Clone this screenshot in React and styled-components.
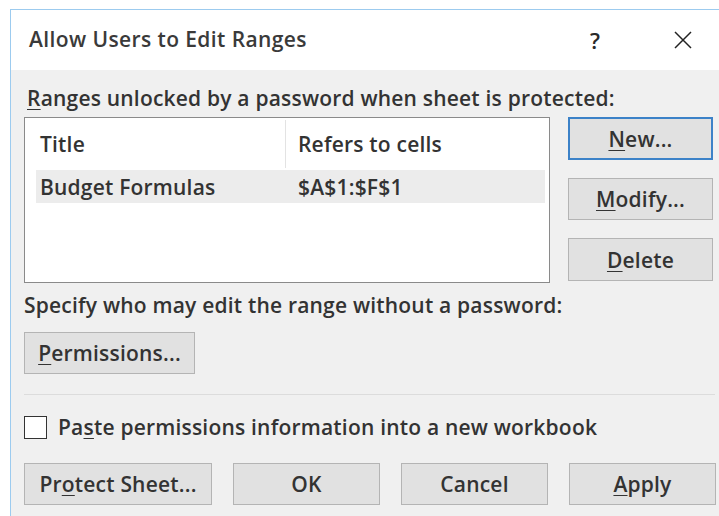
import React from 'react'
import styled, { createGlobalStyle } from 'styled-components';

const GlobalStyle = createGlobalStyle`
  html, body {
    margin: 0;
    background: #ffffff;
  }
  body {
    font-family: "Open Sans", "Noto Sans", sans-serif;
    color: #1e1e1e;
  }
`;

const Page = styled.div`
  height: 516px;
  padding: 9px 0 0 10px;
  box-sizing: border-box;
  overflow: hidden;
`;

const Window = styled.div`
  width: 740px;
  height: 520px;
  border-top: 1px solid #9ccbef;
  border-left: 1px solid #9ccbef;
  background: #f0f0f0;
`;

const TitleBar = styled.div`
  height: 60px;
  background: #ffffff;
  display: flex;
  align-items: center;
  padding-left: 18px;
`;

const Title = styled.div`
  flex: 1;
  font-size: 21px;
  letter-spacing: 0.4px;
  font-weight: 600;
  color: #3a3a3a;
  margin-top: -2px;
`;

const TitleButton = styled.div`
  width: 44px;
  display: flex;
  justify-content: center;
  align-items: center;
  font-size: 22px;
  font-weight: 600;
  color: #2a2a2a;
  margin-right: ${p => p.$mr || 0}px;
`;

const Body = styled.div`
  padding: 16px 0 0 13px;
  width: 692px;
  font-size: 21px;
  letter-spacing: 0.2px;
  font-weight: 600;
  color: #333333;
`;

const Label = styled.div`
  line-height: 24px;
  white-space: nowrap;
  margin-left: ${p => p.$ml || 0}px;
`;

const U = styled.span`
  text-decoration: underline;
  text-decoration-thickness: 1px;
  text-underline-offset: 3px;
`;

const TopRow = styled.div`
  display: flex;
  gap: 18px;
  margin-top: 7px;
`;

const ListBox = styled.div`
  width: 526px;
  height: 166px;
  box-sizing: border-box;
  border: 1px solid #8a8a8a;
  background: #ffffff;
  padding: 2px 4px 0 11px;
`;

const ListRow = styled.div`
  display: flex;
  height: ${p => p.$h}px;
  align-items: center;
  background: ${p => p.$selected ? '#ececec' : 'transparent'};
  margin-top: ${p => p.$selected ? 2 : 0}px;
`;

const Cell = styled.div`
  box-sizing: border-box;
  width: ${p => p.$w ? p.$w + 'px' : 'auto'};
  flex: ${p => p.$w ? 'none' : 1};
  padding-left: ${p => p.$pl}px;
  height: 100%;
  display: flex;
  align-items: center;
  white-space: nowrap;
  border-right: ${p => p.$divider ? '1px solid #e3e3e3' : 'none'};
`;

const ButtonColumn = styled.div`
  display: flex;
  flex-direction: column;
  gap: 18px;
`;

const Button = styled.div`
  box-sizing: border-box;
  width: ${p => p.$w || 145}px;
  height: ${p => p.$h || 43}px;
  margin-top: ${p => p.$mt || 0}px;
  display: flex;
  align-items: center;
  justify-content: center;
  background: #e1e1e1;
  border: ${p => p.$default ? '2px solid #3c82c8' : '1px solid #b4b4b4'};
  white-space: nowrap;
`;

const Separator = styled.div`
  height: 1px;
  background: #dcdcdc;
  margin: 20px 0 20px 0;
  width: 691px;
`;

const CheckRow = styled.div`
  display: flex;
  align-items: center;
  gap: 11px;
`;

const CheckBox = styled.div`
  width: 23px;
  height: 23px;
  box-sizing: border-box;
  border: 1px solid #333333;
  background: #ffffff;
`;

const BottomRow = styled.div`
  display: flex;
  gap: 21px;
  margin-top: 24px;
`;

const CloseIcon = () => (
  <svg width="20" height="20" viewBox="0 0 20 20">
    <path d="M2 2 L18 18 M18 2 L2 18" stroke="#222" strokeWidth="1.5" fill="none" />
  </svg>
);

const App = () => {
  return (
    <Page>
      <GlobalStyle />
      <Window>
        <TitleBar>
          <Title>Allow Users to Edit Ranges</Title>
          <TitleButton $mr={44}>?</TitleButton>
          <TitleButton $mr={46}><CloseIcon /></TitleButton>
        </TitleBar>
        <Body>
          <Label $ml={3}><U>R</U>anges unlocked by a password when sheet is protected:</Label>
          <TopRow>
            <ListBox>
              <ListRow $h={48}>
                <Cell $w={250} $pl={4} $divider>Title</Cell>
                <Cell $pl={12}>Refers to cells</Cell>
              </ListRow>
              <ListRow $h={33} $selected>
                <Cell $w={250} $pl={4}>Budget Formulas</Cell>
                <Cell $pl={12}>$A$1:$F$1</Cell>
              </ListRow>
            </ListBox>
            <ButtonColumn>
              <Button $default><span><U>N</U>ew...</span></Button>
              <Button $h={42}><span><U>M</U>odify...</span></Button>
              <Button><span><U>D</U>elete</span></Button>
            </ButtonColumn>
          </TopRow>
          <Label style={{ marginTop: 10 }}>Specify who may edit the range without a password:</Label>
          <Button $w={171} $h={42} $mt={15}><span><U>P</U>ermissions...</span></Button>
          <Separator />
          <CheckRow>
            <CheckBox />
            <Label>Pa<U>s</U>te permissions information into a new workbook</Label>
          </CheckRow>
          <BottomRow>
            <Button $w={188} $h={42}><span>Pr<U>o</U>tect Sheet...</span></Button>
            <Button $w={147} $h={42}>OK</Button>
            <Button $w={147} $h={42}>Cancel</Button>
            <Button $w={147} $h={42}><span><U>A</U>pply</span></Button>
          </BottomRow>
        </Body>
      </Window>
    </Page>
  )
}

export default App
